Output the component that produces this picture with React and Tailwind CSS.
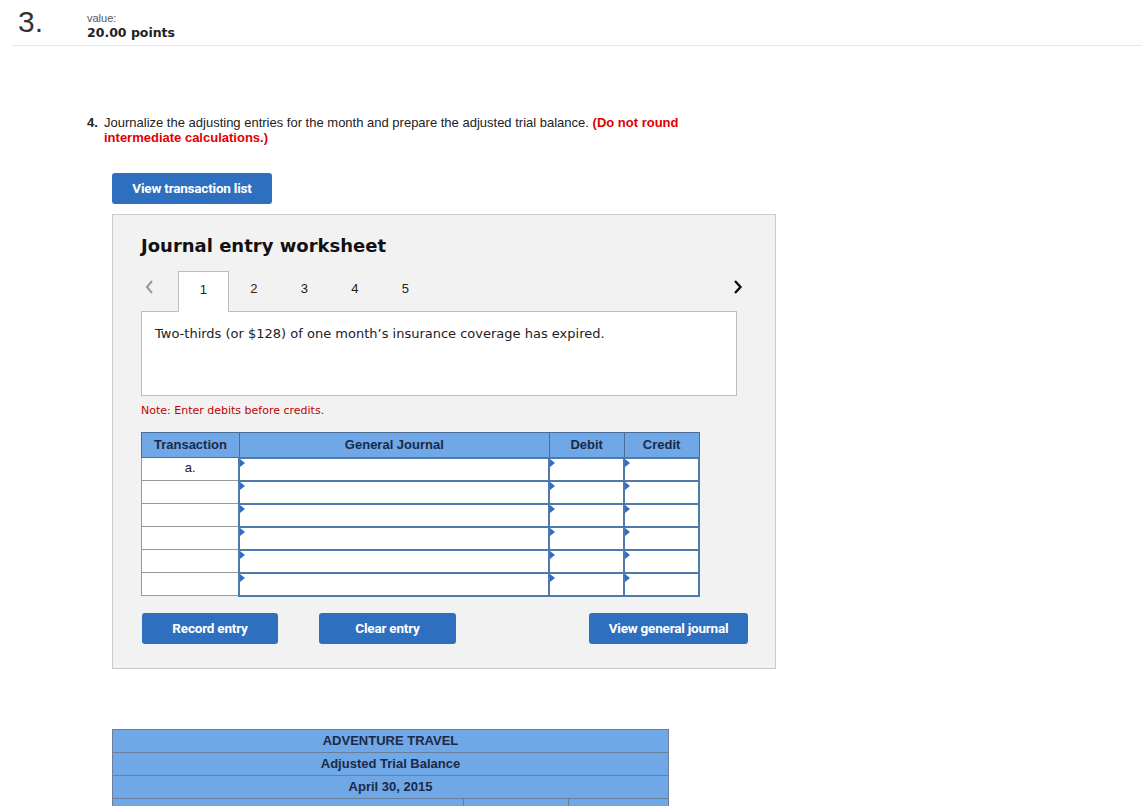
import React from 'react';

const rows = ['a.', '', '', '', '', ''];

function Arrowhead() {
  return (
    <span className="absolute left-0 top-0 w-0 h-0 border-y-[4px] border-y-transparent border-l-[5px] border-l-[#2e6ec4]" />
  );
}

function BlueButton({ children, className = '' }) {
  return (
    <button
      className={`h-[31px] rounded-[3px] bg-[#2f6fc0] text-white text-[13.5px] font-bold font-['Roboto',sans-serif] tracking-[-0.2px] ${className}`}
    >
      {children}
    </button>
  );
}

export default function App() {
  return (
    <div className="w-[1142px] min-h-[806px] bg-white font-['Liberation_Sans',Arial,sans-serif] text-[#222]">
      {/* question header */}
      <div className="ml-[12px] h-[46px] flex border-b border-[#e6e6e6]">
        <div className="w-[75px] pl-[6px] pt-[6px] text-[30px] leading-[32px] text-[#333]">3.</div>
        <div className="pt-[12px]">
          <div className="text-[11px] leading-[12px] text-[#555]">value:</div>
          <div className="font-['DejaVu_Sans',Verdana,sans-serif] text-[12.5px] leading-[18px] font-bold text-[#222]">20.00 points</div>
        </div>
      </div>

      {/* prompt */}
      <div className="mt-[69px] ml-[87px] flex text-[13px] leading-[15px]">
        <span className="w-[17px] font-bold">4.</span>
        <p className="w-[590px]">
          Journalize the adjusting entries for the month and prepare the adjusted trial balance.{' '}
          <span className="font-bold text-[#e00000]">(Do not round intermediate calculations.)</span>
        </p>
      </div>

      <div className="ml-[112px] mt-[28px]">
        <BlueButton className="w-[160px] h-[30px]">View transaction list</BlueButton>
      </div>

      {/* worksheet */}
      <div className="ml-[112px] mt-[10px] w-[664px] h-[455px] bg-[#f2f2f2] border border-[#cacaca] px-[28px] pt-[20px]">
        <h2 className="font-['DejaVu_Sans',Verdana,sans-serif] font-bold text-[18px] leading-[22px] text-[#111]">
          Journal entry worksheet
        </h2>

        <div className="mt-[14px] flex items-end h-[40px]">
          <div className="w-[37px] h-full flex items-center pl-[3px] pb-[8px] text-[#999]">
            <svg width="10" height="16" viewBox="0 0 10 16" fill="none" stroke="currentColor" strokeWidth="2">
              <path d="M8 2 L3 8 L8 14" />
            </svg>
          </div>
          {[1, 2, 3, 4, 5].map((n) => (
            <div
              key={n}
              className={`w-[50.5px] h-[40px] flex items-center justify-center pb-[5px] text-[13px] ${
                n === 1 ? 'bg-white border border-b-0 border-[#bdbdbd] relative z-10 -mb-px h-[41px]' : ''
              }`}
            >
              {n}
            </div>
          ))}
          <div className="ml-auto h-full flex items-center pr-[4px] pb-[8px] text-[#111]">
            <svg width="10" height="16" viewBox="0 0 10 16" fill="none" stroke="currentColor" strokeWidth="2.4">
              <path d="M2 2 L7.5 8 L2 14" />
            </svg>
          </div>
        </div>

        <div className="w-[596px] h-[85px] bg-white border border-[#bdbdbd] px-[13px] pt-[14px] font-['DejaVu_Sans',Verdana,sans-serif] text-[13px] leading-[16px] text-[#222]">
          Two-thirds (or $128) of one month’s insurance coverage has expired.
        </div>

        <p className="mt-[8px] font-['DejaVu_Sans',Verdana,sans-serif] text-[11px] leading-[14px] text-[#c00000]">
          Note: Enter debits before credits.
        </p>

        <table className="mt-[14px] border-collapse w-[559px] text-[13px]">
          <thead>
            <tr className="h-[25px] bg-[#6fa7e7] text-[#1b2a45] font-bold">
              <th className="w-[98px] border border-[#4a6d98]">Transaction</th>
              <th className="w-[311px] border border-[#4a6d98]">General Journal</th>
              <th className="w-[75px] border border-[#4a6d98]">Debit</th>
              <th className="w-[75px] border border-[#4a6d98]">Credit</th>
            </tr>
          </thead>
          <tbody>
            {rows.map((r, i) => (
              <tr key={i} className="h-[23px] bg-white">
                <td className="border border-[#9a9a9a] text-center align-top pt-[3px] leading-[14px]">{r}</td>
                <td className="relative border-2 border-[#4f78ab]"><Arrowhead /></td>
                <td className="relative border-2 border-[#4f78ab]"><Arrowhead /></td>
                <td className="relative border-2 border-[#4f78ab]"><Arrowhead /></td>
              </tr>
            ))}
          </tbody>
        </table>

        <div className="mt-[16px] flex pl-[1px]">
          <BlueButton className="w-[136px]">Record entry</BlueButton>
          <BlueButton className="w-[137px] ml-[41px]">Clear entry</BlueButton>
          <BlueButton className="w-[159px] ml-auto -mr-[1px]">View general journal</BlueButton>
        </div>
      </div>

      {/* trial balance */}
      <div className="ml-[112px] mt-[60px] w-[557px] bg-[#6fa7e7] border border-[#6a7f99] text-[13px] font-bold text-[#1b2a45]">
        <div className="h-[23px] flex items-center justify-center border-b border-[#6a7f99]">ADVENTURE TRAVEL</div>
        <div className="h-[23px] flex items-center justify-center border-b border-[#6a7f99]">Adjusted Trial Balance</div>
        <div className="h-[23px] flex items-center justify-center border-b border-[#6a7f99]">April 30, 2015</div>
        <div className="h-[23px] flex">
          <div className="w-[351px] flex items-center justify-center border-r border-[#6a7f99]">Account Title</div>
          <div className="w-[105px] flex items-center justify-center border-r border-[#6a7f99]">Debit</div>
          <div className="flex-1 flex items-center justify-center">Credit</div>
        </div>
      </div>
    </div>
  );
}
